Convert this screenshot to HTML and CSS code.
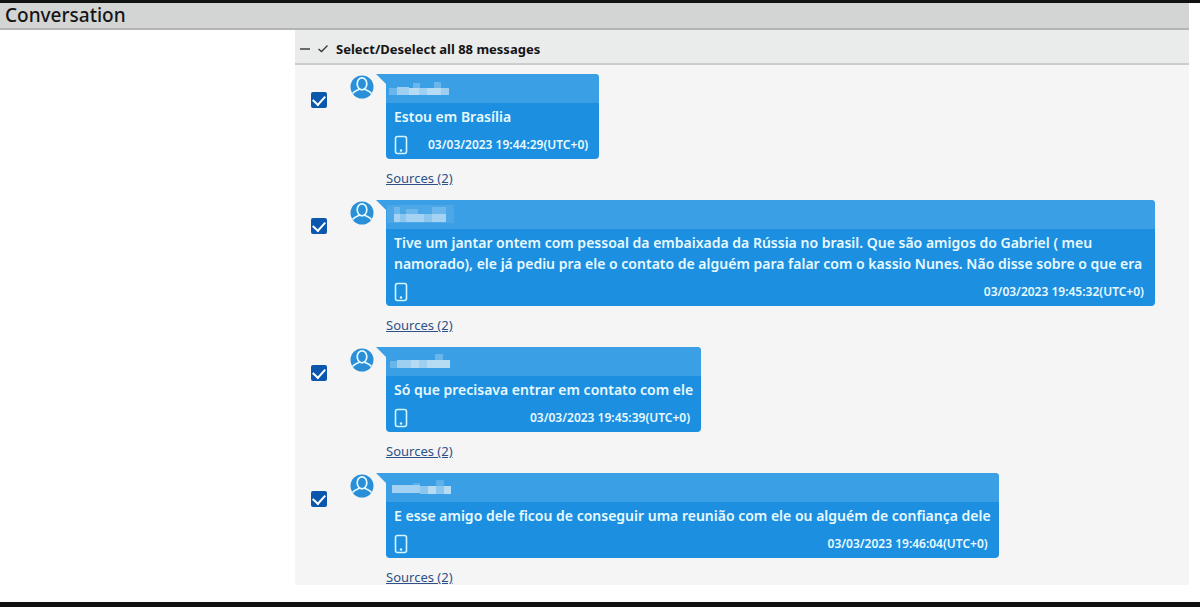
FILE: index.html
```
<!DOCTYPE html>
<html lang="pt-BR">
<head>
<meta charset="UTF-8">
<meta name="viewport" content="width=device-width, initial-scale=1.0">
<title>Conversation</title>
<link rel="stylesheet" href="styles.css">
</head>
<body>
<!-- Shared icons -->
<svg class="sprite" aria-hidden="true">
  <symbol id="user" viewBox="0 0 24 24">
    <circle cx="12" cy="12" r="11.5" fill="#2b8fd8"/>
    <g fill="none" stroke="#e4fbff" stroke-width="1.7">
      <ellipse cx="12" cy="8.8" rx="4.800" ry="6"/>
      <path d="M2.500 18.500C4.500 16 7 15.200 9.800 14M21.500 18.500C19.500 16 17 15.200 14.200 14"/>
    </g>
  </symbol>
  <symbol id="phone" viewBox="0 0 14 20">
    <rect x="1.500" y="1.500" width="11" height="17" rx="2" fill="none" stroke="#d5f6ff" stroke-width="1.600"/>
    <circle cx="7" cy="15.500" r="1.200" fill="#d5f6ff"/>
  </symbol>
</svg>

<div class="page">
  <header class="title-bar">
    <h1>Conversation</h1>
  </header>

  <main class="panel">
    <div class="toolbar">
      <button type="button" class="icon-button" aria-label="Collapse">
        <svg width="12" height="12" viewBox="0 0 12 12"><path d="M1 6H11" stroke="#333" stroke-width="1.400"/></svg>
      </button>
      <button type="button" class="select-all">
        <svg width="12" height="12" viewBox="0 0 12 12"><path d="M1.500 6L4.500 8.500L10.500 2.500" fill="none" stroke="#333" stroke-width="1.300"/></svg>
        Select/Deselect all 88 messages
      </button>
    </div>

    <div class="messages">
      <article class="message">
        <input type="checkbox" class="check" aria-label="Select message 1" checked>
        <svg class="avatar"><use href="#user"/></svg>
        <div class="content">
          <div class="bubble">
            <div class="sender">
              <svg width="64" height="20" viewBox="0 0 64 20">
                <path fill="#6ab6eb" d="M3 9h8v7H3zM27 4h7v5h-7zM48 3h7v6h-7z"/>
                <path fill="#9ecff1" d="M11 8h12v8H11zM33 9h8v7h-8zM55 9h8v7h-8z"/>
                <path fill="#b6dcf4" d="M23 9h10v7H23zM41 9h14v7H41z"/>
              </svg>
            </div>
            <p class="text">Estou em Brasília</p>
            <div class="meta">
              <svg class="phone"><use href="#phone"/></svg>
              <time>03/03/2023 19:44:29(UTC+0)</time>
            </div>
          </div>
          <a href="#" class="sources">Sources (2)</a>
        </div>
      </article>

      <article class="message">
        <input type="checkbox" class="check" aria-label="Select message 2" checked>
        <svg class="avatar"><use href="#user"/></svg>
        <div class="content">
          <div class="bubble">
            <div class="sender">
              <svg width="68" height="20" viewBox="0 0 68 20">
                <path fill="#4ba7e5" d="M1 0h67v18H1z"/>
                <path fill="#6cb7eb" d="M8 2h6v8H8zM20 4h12v6H20zM46 2h14v8H46z"/>
                <path fill="#a5d2f2" d="M8 9h6v8H8zM20 9h18v8H20zM46 9h14v8H46z"/>
                <path fill="#8bc6ef" d="M14 9h6v8h-6zM38 9h8v8h-8z"/>
              </svg>
            </div>
            <p class="text">Tive um jantar ontem com pessoal da embaixada da Rússia no brasil. Que são amigos do Gabriel ( meu namorado), ele já pediu pra ele o contato de alguém para falar com o kassio Nunes. Não disse sobre o que era</p>
            <div class="meta">
              <svg class="phone"><use href="#phone"/></svg>
              <time>03/03/2023 19:45:32(UTC+0)</time>
            </div>
          </div>
          <a href="#" class="sources">Sources (2)</a>
        </div>
      </article>

      <article class="message">
        <input type="checkbox" class="check" aria-label="Select message 3" checked>
        <svg class="avatar"><use href="#user"/></svg>
        <div class="content">
          <div class="bubble">
            <div class="sender">
              <svg width="66" height="20" viewBox="0 0 66 20">
                <path fill="#6ab6eb" d="M4 9h7v7H4zM49 2h8v7h-8z"/>
                <path fill="#9ecff1" d="M11 8h14v8H11zM33 8h8v8h-8z"/>
                <path fill="#b6dcf4" d="M25 8h8v8h-8zM41 8h23v8H41z"/>
              </svg>
            </div>
            <p class="text">Só que precisava entrar em contato com ele</p>
            <div class="meta">
              <svg class="phone"><use href="#phone"/></svg>
              <time>03/03/2023 19:45:39(UTC+0)</time>
            </div>
          </div>
          <a href="#" class="sources">Sources (2)</a>
        </div>
      </article>

      <article class="message">
        <input type="checkbox" class="check" aria-label="Select message 4" checked>
        <svg class="avatar"><use href="#user"/></svg>
        <div class="content">
          <div class="bubble">
            <div class="sender">
              <svg width="66" height="20" viewBox="0 0 66 20">
                <path fill="#5eb0e8" d="M50 2h8v7h-8zM27 5h7v3h-7z"/>
                <path fill="#a2d1f2" d="M6 7h28v8H6z"/>
                <path fill="#8bc6ef" d="M34 8h8v8h-8zM50 8h8v8h-8z"/>
                <path fill="#b6dcf4" d="M42 8h8v8h-8zM58 8h7v8h-7z"/>
              </svg>
            </div>
            <p class="text">E esse amigo dele ficou de conseguir uma reunião com ele ou alguém de confiança dele</p>
            <div class="meta">
              <svg class="phone"><use href="#phone"/></svg>
              <time>03/03/2023 19:46:04(UTC+0)</time>
            </div>
          </div>
          <a href="#" class="sources">Sources (2)</a>
        </div>
      </article>
    </div>
  </main>
</div>
</body>
</html>
```
FILE: styles.css
```
* {
    box-sizing: border-box;
}

body {
    margin: 0;
    background-color: #fff;
    font-family: "Noto Sans", "Segoe UI", sans-serif;
    font-size: 14px;
    color: #151515;
}

.sprite {
    display: none;
}

.page {
    min-height: 100vh;
    padding-right: 11px;
    border-top: 3px solid #111;
    border-bottom: 5px solid #111;
}

.title-bar {
    padding: 0 5px;
    background-color: #d3d4d4;
    border-bottom: 2px solid #b3b3b3;
}

.title-bar h1 {
    margin: 0;
    font-size: 19px;
    font-weight: 500;
    line-height: 25px;
}

.panel {
    margin-left: 295px;
    background-color: #f5f5f5;
}

/* Select all bar */
.toolbar {
    display: flex;
    align-items: center;
    gap: 6px;
    height: 35px;
    padding: 4px 4px 0;
    background-color: #eaebeb;
    border-bottom: 2px solid #ccc;
}

.toolbar button {
    display: flex;
    align-items: center;
    padding: 0;
    border: none;
    background: none;
    color: inherit;
    font-family: inherit;
}

.toolbar .select-all {
    gap: 7px;
    font-size: 13px;
    font-weight: 700;
}

/* Message list */
.messages {
    display: flex;
    flex-direction: column;
    gap: 14px;
    padding: 9px 34px 0 16px;
}

.message {
    display: flex;
    align-items: flex-start;
}

.check {
    appearance: none;
    flex: none;
    width: 16px;
    height: 16px;
    margin: 18px 23px 0 0;
    border-radius: 2px;
    background-color: #0b57ae;
}

.check:checked::before {
    content: "";
    display: block;
    width: 6px;
    height: 10px;
    margin: 1px auto 0;
    border: solid #fff;
    border-width: 0 2px 2px 0;
    transform: rotate(42deg);
}

.avatar {
    flex: none;
    width: 24px;
    height: 24px;
    margin: 1px 12px 0 0;
}

.content {
    display: flex;
    flex-direction: column;
    align-items: flex-start;
}

.bubble {
    position: relative;
    border-radius: 0 4px 4px 4px;
    background-color: #1c8fe0;
    color: #e8faff;
}

/* Bubble tail */
.bubble::before {
    content: "";
    position: absolute;
    top: 0;
    left: -10px;
    border-top: 10px solid #3a9fe5;
    border-left: 10px solid transparent;
}

.sender {
    height: 29px;
    padding-top: 5px;
    border-radius: 0 4px 0 0;
    background-color: #3a9fe5;
}

.sender svg {
    display: block;
}

.text {
    margin: 0;
    padding: 3px 8px 3px;
    font-weight: 600;
    line-height: 21px;
}

.meta {
    display: flex;
    align-items: center;
    justify-content: space-between;
    gap: 20px;
    padding: 5px 11px 4px 8px;
    font-size: 12px;
    font-weight: 600;
    line-height: 20px;
}

.phone {
    width: 14px;
    height: 20px;
}

.sources {
    margin-top: 11px;
    color: #2e5188;
    font-size: 13px;
    line-height: 16px;
}
```
